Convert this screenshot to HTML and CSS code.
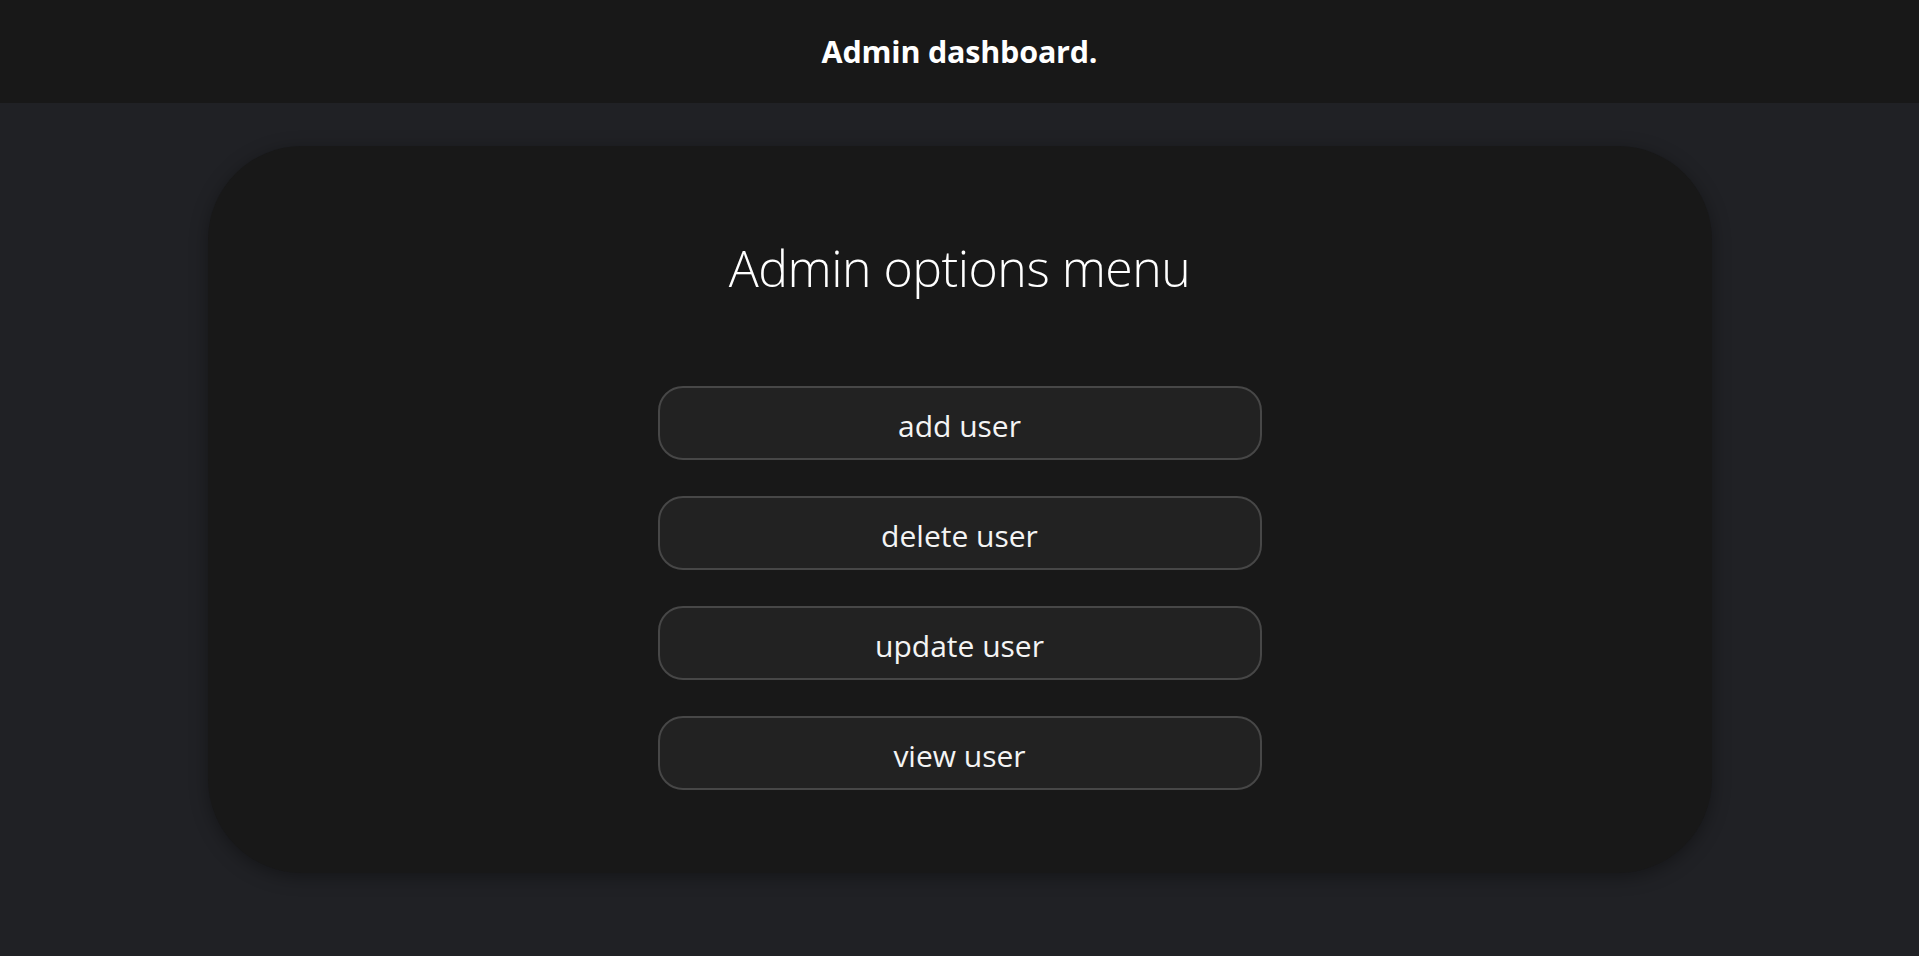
FILE: index.html
```html
<!DOCTYPE html>
<html>
<head>
<meta charset="utf-8">
<link rel="stylesheet" href="styles.css">
</head>
<body>
<header class="topbar"><h1 class="brand">Admin dashboard.</h1></header>
<main class="card">
  <h2 class="title">Admin options menu</h2>
  <nav class="options">
    <button class="opt">add user</button>
    <button class="opt">delete user</button>
    <button class="opt">update user</button>
    <button class="opt">view user</button>
  </nav>
</main>
</body>
</html>
```
FILE: styles.css
```css
* { box-sizing: border-box; }
html, body { margin: 0; padding: 0; }
body {
  background: #202125;
  font-family: "Open Sans", "Noto Sans", sans-serif;
  color: #fff;
  height: 956px;
  overflow: hidden;
}
.topbar {
  height: 103px;
  background: #181818;
  display: flex;
  align-items: center;
  justify-content: center;
  padding-bottom: 1px;
}
.brand {
  margin: 0;
  font-size: 30.5px;
  font-weight: 700;
  letter-spacing: -0.2px;
}
.card {
  width: 1504px;
  height: 727px;
  margin: 43px auto 0;
  background: #181818;
  border-radius: 94px;
  box-shadow: 0 4px 18px rgba(0,0,0,0.35);
  display: flex;
  flex-direction: column;
  align-items: center;
  padding-top: 88px;
}
.title {
  margin: 0;
  font-size: 50px;
  font-weight: 300;
  line-height: 68px;
  letter-spacing: -0.5px;
}
.options {
  margin-top: 84px;
  display: flex;
  flex-direction: column;
  gap: 36px;
}
.opt {
  width: 604px;
  height: 74px;
  background: #222222;
  border: 2px solid #474747;
  border-radius: 25px;
  color: #f4f4f4;
  font-family: inherit;
  font-size: 30px;
  font-weight: 400;
  padding: 4px 0 0;
}
```
